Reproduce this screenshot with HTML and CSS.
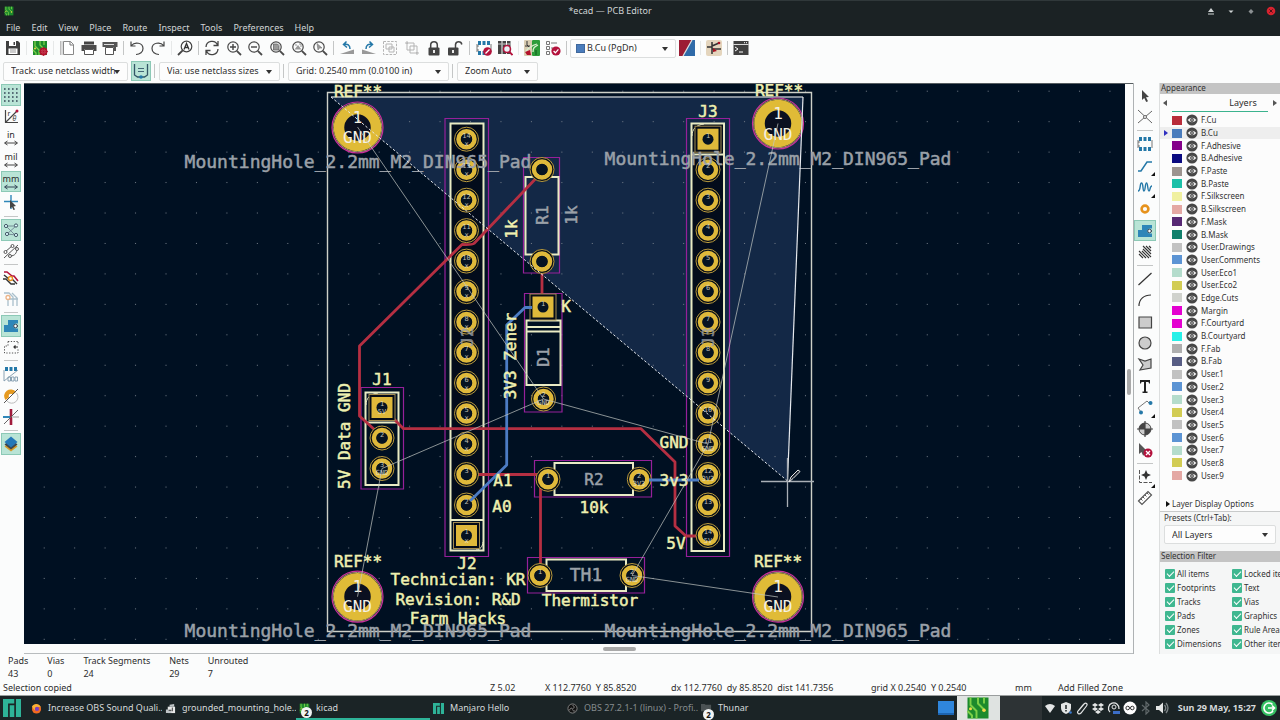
FILE: index.html
```html
<!DOCTYPE html>
<html lang="en">
<head>
<meta charset="utf-8">
<title>*ecad — PCB Editor</title>
<link rel="stylesheet" href="styles.css">
</head>
<body>
<svg class="defs" aria-hidden="true">
  <defs>
    <symbol id="eye" viewBox="0 0 12 12"><circle cx="6" cy="6" r="5.6" fill="#474747"/><path d="M1.6 6Q6 1.6 10.4 6Q6 10.4 1.6 6Z" fill="#f4f4f4"/><circle cx="6" cy="6" r="1.9" fill="#474747"/><circle cx="6" cy="6" r=".8" fill="#ddd"/></symbol>
    <symbol id="board" viewBox="0 0 16 16"><rect x="1" y="1" width="14" height="14" fill="#1c8a2c"/><path d="M3 1v5l4 4v5M8 1v4l4 4M1 10l3 3v2M12 1v4" stroke="#7ccf48" stroke-width="1.3" fill="none"/><circle cx="12" cy="9.500" r="1.200" fill="#f2d84a"/><circle cx="3" cy="8.500" r="1" fill="#f2d84a"/></symbol>
    <symbol id="lens" viewBox="0 0 16 16"><circle cx="7" cy="7" r="5.2" fill="none" stroke="#4a4a4a" stroke-width="1.2"/><path d="M10.8 10.8L15 15" stroke="#4a4a4a" stroke-width="1.8"/></symbol>
    <symbol id="manjaro" viewBox="0 0 16 16"><path d="M0 0h10v4H4.500v12H0zM6 5.500h4V16H6zM11.500 0H16v16h-4.500z" fill="#2eb398"/></symbol>
    <symbol id="zone" viewBox="0 0 16 16"><path d="M5 2h10v3.500h-2a2.500 2.500 0 0 0 0 5h2V14H1V7h4z" fill="#2f86b8"/><path d="M12.500 8H15" stroke="#333" stroke-width="1.500"/><circle cx="12.500" cy="8" r="1.800" fill="#fff" stroke="#345"/></symbol>
    <symbol id="fp" viewBox="0 0 16 16"><path d="M1 4v8M15 4v8M1 6h2M1 10h2" stroke="#555" stroke-width=".8"/><path d="M2 1h3v4H2zM6.500 1h3v4h-3zM11 1h3v4h-3zM2 11h3v4H2zM6.500 11h3v4h-3zM11 11h3v4h-3z" fill="#2478a8"/></symbol>
    <g id="pad"><circle r="12" fill="#050c18" stroke="#b99a3e"/><circle r="8" fill="none" stroke="#dfb93b" stroke-width="4.500"/><circle r="5.500" fill="#061322"/></g>
    <g id="sqpad"><rect x="-13" y="-13" width="26" height="26" fill="#050c18" stroke="#a28b50"/><rect x="-10.500" y="-10.500" width="21" height="21" fill="#dfb93b"/><circle r="5.500" fill="#061322"/></g>
    <g id="hole"><circle r="25.500" fill="#0b1020" stroke="#c8309c" stroke-width="1.200"/><circle r="24.300" fill="none" stroke="#c9b98a" stroke-width=".8"/><circle r="18.500" fill="none" stroke="#e0bb37" stroke-width="10.500"/></g>
    <pattern id="grid" x="29" y="76" width="30.450" height="30.450" patternUnits="userSpaceOnUse"><rect x="14.700" y="14.700" width="1" height="1" fill="#76808a"/></pattern>
  </defs>
</svg>

<header class="titlebar">
  <svg class="ic10"><use href="#board"/></svg>
  <h1>*ecad — PCB Editor</h1>
  <div class="wincontrols">
    <button aria-label="Shade"><svg viewBox="0 0 10 10"><path d="M2 6l3-4 3 4zM2 7.500h6v1H2z" fill="#cfd3d4"/></svg></button>
    <button aria-label="Minimize"><svg viewBox="0 0 10 10"><path d="M2.500 4.500h5L5 7z" fill="#cfd3d4"/></svg></button>
    <button aria-label="Maximize"><svg viewBox="0 0 10 10"><path d="M2.500 5.500L5 3l2.500 2.500L5 8z" fill="#8b9092"/></svg></button>
    <button aria-label="Close"><svg viewBox="0 0 10 10"><circle cx="5" cy="5" r="4.300" fill="#d8232f"/><path d="M3.400 3.400l3.200 3.200M6.600 3.400L3.400 6.600" stroke="#501018"/></svg></button>
  </div>
</header>
<nav class="menubar">
  <button>File</button><button>Edit</button><button>View</button><button>Place</button><button>Route</button><button>Inspect</button><button>Tools</button><button>Preferences</button><button>Help</button>
</nav>

<div class="toolbar">
  <div class="g g1"><button aria-label="Save"><svg viewBox="0 0 16 16"><path d="M1 1h12l2 2v12H1z" fill="#3f3f3f"/><path d="M4 1h7v5H4z" fill="#fff"/><path d="M8.500 2h1.500v3H8.500z" fill="#3f3f3f"/><path d="M3.500 8.500h9V14h-9z" fill="#fff"/><path d="M5 10h6M5 12h6" stroke="#999"/></svg></button></div>
  <span class="sep faint"></span>
  <div class="g g1"><button aria-label="Board setup"><svg viewBox="0 0 16 16"><use href="#board"/><circle cx="11.500" cy="11.500" r="3" fill="#e8a0a8" stroke="#b3122c" stroke-width="1.800"/><path d="M11.500 7v9M7 11.500h9M8.500 8.500l6 6M14.500 8.500l-6 6" stroke="#b3122c" stroke-width=".8"/></svg></button></div>
  <span class="sep faint"></span>
  <div class="g g3">
    <button aria-label="Page settings"><svg viewBox="0 0 16 16"><path d="M4.500 1.500h7l3 3v10h-10z" fill="#fff" stroke="#888"/><path d="M1.500 1v14M3 1v14" stroke="#bbb"/><path d="M11 1.500v3.500h3.500" stroke="#777" fill="none"/></svg></button>
    <button aria-label="Print"><svg viewBox="0 0 16 16"><path d="M3 1.500h10v3H3z" fill="#444"/><path d="M.5 5h15v6H13V9H3v2H.5z" fill="#4a4a4a"/><path d="M3.500 9.500h9v5h-9z" fill="#fff" stroke="#555"/></svg></button>
    <button aria-label="Plot"><svg viewBox="0 0 16 16"><path d="M.5 2h15v5H.5z" fill="#555"/><path d="M2 4.500h10" stroke="#ddd"/><path d="M3.500 7.500h8v7h-8z" fill="#fff" stroke="#555"/><path d="M12 7h2v4h-2z" fill="#555"/></svg></button>
  </div>
  <span class="sep"></span>
  <div class="g g2">
    <button aria-label="Undo"><svg viewBox="0 0 16 16"><path d="M2 1.500V6h4.500M2.500 5.500c3-4 11.500-3 11.500 3 0 3.500-3 6-7 6" fill="none" stroke="#444" stroke-width="1.200"/></svg></button>
    <button aria-label="Redo"><svg viewBox="0 0 16 16"><path d="M14 1.500V6H9.500M13.500 5.500C10.500 1.500 2 2.500 2 8.500c0 3.500 3 6 7 6" fill="none" stroke="#444" stroke-width="1.200"/></svg></button>
  </div>
  <span class="sep faint"></span>
  <div class="g g1"><button aria-label="Find"><svg viewBox="0 0 16 16"><circle cx="9.500" cy="6.500" r="5.300" fill="none" stroke="#444" stroke-width="1.200"/><path d="M5.700 10.300L1 15" stroke="#444" stroke-width="1.800"/><path d="M7 9.500L9.500 3.500 12 9.500M8 7.500h3" fill="none" stroke="#333" stroke-width="1.300"/></svg></button></div>
  <span class="sep"></span>
  <div class="g g6">
    <button aria-label="Refresh"><svg viewBox="0 0 16 16"><path d="M2 7a6 6 0 0 1 11.500-2M14 9a6 6 0 0 1-11.500 2M14 1v4.500H9.500M2 15v-4.500h4.500" fill="none" stroke="#444" stroke-width="1.300"/></svg></button>
    <button aria-label="Zoom in"><svg viewBox="0 0 16 16"><use href="#lens"/><path d="M4 7h6M7 4v6" stroke="#444" stroke-width="1.400"/></svg></button>
    <button aria-label="Zoom out"><svg viewBox="0 0 16 16"><use href="#lens"/><path d="M4 7h6" stroke="#444" stroke-width="1.400"/></svg></button>
    <button aria-label="Zoom to fit page"><svg viewBox="0 0 16 16"><use href="#lens"/><path d="M4.500 4h4l1.500 1.500V10H4.500z" fill="#999" stroke="#666" stroke-width=".8"/></svg></button>
    <button aria-label="Zoom to fit objects"><svg viewBox="0 0 16 16"><use href="#lens"/><path d="M3.500 9.500L7 5l3.500 4.500z" fill="#999"/><path d="M4 5h2M8 4h2v3" stroke="#999" fill="none"/></svg></button>
    <button aria-label="Zoom to selection"><svg viewBox="0 0 16 16"><use href="#lens"/><path d="M5 3.500l5 4.500H7.500L6 10z" fill="#999" stroke="#777" stroke-width=".6"/></svg></button>
  </div>
  <span class="sep"></span>
  <div class="g g6">
    <button aria-label="Rotate left"><svg viewBox="0 0 16 16"><path d="M15 9.500V14H1z" fill="#999"/><path d="M7.500 1.500L4.500 4.500l3.500 3M5 4.500C8.500 3.500 11 5 11 9" fill="none" stroke="#2478a8" stroke-width="1.500"/></svg></button>
    <button aria-label="Rotate right"><svg viewBox="0 0 16 16"><path d="M1 9.500V14h14z" fill="#999"/><path d="M8.500 1.500l3 3-3.500 3M11 4.500C7.500 3.500 5 5 5 9" fill="none" stroke="#2478a8" stroke-width="1.500"/></svg></button>
    <button aria-label="Group" disabled><svg viewBox="0 0 16 16"><path d="M1.500 1.500h13v13h-13z" fill="none" stroke="#b4b4b4" stroke-dasharray="2.500 1.300"/><path d="M4 4h6v5H4zM7 7h5v5H7z" fill="none" stroke="#b4b4b4"/></svg></button>
    <button aria-label="Ungroup" disabled><svg viewBox="0 0 16 16"><path d="M3 3h7v7H3zM6 6h7v7H6z" fill="none" stroke="#b4b4b4"/><path d="M1 3h3M3 1v3M12 13h3M13 12v3" stroke="#b4b4b4"/></svg></button>
    <button aria-label="Lock"><svg viewBox="0 0 16 16"><path d="M4.700 8V5a3.300 3.300 0 0 1 6.600 0v3" fill="none" stroke="#444" stroke-width="1.500"/><rect x="2.500" y="7.500" width="11" height="8" rx="1" fill="#444"/><path d="M8 10v3" stroke="#fff" stroke-width="1.800"/></svg></button>
    <button aria-label="Unlock"><svg viewBox="0 0 16 16"><path d="M8.500 8V4.500a3.200 3.200 0 0 1 6.300 0" fill="none" stroke="#444" stroke-width="1.500"/><rect x="1" y="7.500" width="10.500" height="8" rx="1" fill="#444"/><path d="M6 10v3" stroke="#fff" stroke-width="1.800"/></svg></button>
  </div>
  <span class="sep wide"></span>
  <div class="g g2">
    <button aria-label="Footprint editor"><svg viewBox="0 0 16 16"><use href="#fp"/><circle cx="11.500" cy="11.500" r="4.300" fill="#b3123c"/><path d="M9.500 13.500l4-4" stroke="#fff" stroke-width="1.300"/></svg></button>
    <button aria-label="Footprint library"><svg viewBox="0 0 16 16"><path d="M1 1h3.500v13H1zM5.500 1H9v13H5.500zM10 1h3.500v13H10z" fill="#444"/><path d="M1 4h3.500M5.500 4H9M10 4h3.500" stroke="#ccc"/><circle cx="10" cy="9" r="3.500" fill="#e9f1f5" stroke="#b3123c" stroke-width="1.500"/><path d="M12.500 12l3 3" stroke="#b3123c" stroke-width="1.800"/></svg></button>
  </div>
  <span class="sep faint"></span>
  <div class="g g2">
    <button aria-label="Update from schematic"><svg viewBox="0 0 16 16"><rect x="0" y="0" width="8" height="16" rx="1" fill="#d9cdb2"/><rect x="8" y="0" width="8" height="16" rx="1" fill="#2c9c3a"/><path d="M3 1v4l3 3M1 6h5" stroke="#333" fill="none"/><path d="M2 13c0-4 3-5 8-8M10 5l3-1M9 12c0-4 1-5 5-7" stroke="#d8f0d0" stroke-width="1.300" fill="none"/><path d="M1 12l5-2 1 5H3z" fill="#b3122c"/><path d="M12 10v5" stroke="#0c5818"/></svg></button>
    <button aria-label="Design rules check"><svg viewBox="0 0 16 16"><path d="M1.500 1.500h3v3h-3zM1.500 6.500h3v3h-3zM1.500 11.500h3v3h-3z" fill="none" stroke="#777"/><path d="M6 3h6M6 8h2" stroke="#777"/><circle cx="11" cy="11" r="4.600" fill="#b3123c"/><path d="M8.600 11l1.800 1.800 3-3.500" fill="none" stroke="#fff" stroke-width="1.300"/></svg></button>
  </div>
  <span class="sep"></span>
  <label class="combo layer"><i></i><select aria-label="Active layer"><option>B.Cu (PgDn)</option></select></label>
  <div class="g g1"><button aria-label="Layer pair"><svg viewBox="0 0 16 16"><path d="M0 0h13L4 16H0z" fill="#9c1c34"/><path d="M16 0v16H4L13 0z" fill="#2f6aa8"/><path d="M13 0L4 16" stroke="#ddd" stroke-width="1.200"/></svg></button></div>
  <span class="sep faint"></span>
  <div class="g g1"><button aria-label="Schematic editor"><svg viewBox="0 0 16 16"><rect width="16" height="16" rx="2" fill="#e4d5bd"/><path d="M6 2v12M1 7h5M6 6l7-3M6 9h9" stroke="#333" stroke-width="1.500" fill="none"/><path d="M7 8l4 3-4 1z" fill="#a12"/><circle cx="13" cy="3" r="1.300" fill="#a12"/></svg></button></div>
  <span class="sep"></span>
  <div class="g g1"><button aria-label="Scripting console"><svg viewBox="0 0 16 16"><rect x=".5" y="1" width="15" height="14" fill="#404040"/><path d="M.5 4.500h15" stroke="#fff" stroke-width=".8"/><path d="M2 7l3 2-3 2M6 12h4" stroke="#fff" fill="none"/><path d="M11 2.700h1M13 2.700h1" stroke="#fff"/></svg></button></div>
</div>

<div class="toolbar second">
  <label class="combo w-track"><select aria-label="Track width"><option>Track: use netclass width</option></select></label>
  <button class="on auto" aria-label="Use existing track width"><svg viewBox="0 0 16 16"><path d="M1.500 1v11l3 2h7l3-2V1" fill="none" stroke="#356" stroke-width="1.300"/><path d="M5 5.500h6M5 8.500h6" stroke="#467" stroke-width="1.200"/><circle cx="8" cy="14" r="1.800" fill="#2478a8"/></svg></button>
  <span class="sep"></span>
  <label class="combo w-via"><select aria-label="Via size"><option>Via: use netclass sizes</option></select></label>
  <span class="sep"></span>
  <label class="combo w-grid"><select aria-label="Grid"><option>Grid: 0.2540 mm (0.0100 in)</option></select></label>
  <span class="sep"></span>
  <label class="combo w-zoom"><select aria-label="Zoom"><option>Zoom Auto</option></select></label>
</div>

<main>
  <div class="side left">
    <div class="v v6">
      <button class="on" aria-label="Show grid"><svg viewBox="0 0 16 16"><path d="M1 2h15M1 6h15M1 10h15M1 14h15" stroke="#345" stroke-width="1.600" stroke-dasharray="1.600 2.400"/></svg></button>
      <button aria-label="Polar coordinates"><svg viewBox="0 0 16 16"><path d="M2.500 1v12.500H15M2.500 13.500L14 2" fill="none" stroke="#444" stroke-width="1.200"/><circle cx="14" cy="2" r="1.500" fill="#b3123c"/><text x="4.500" y="6.500" class="t7">r</text><text x="9.500" y="12" class="t7 it">θ</text></svg></button>
      <button class="unit" aria-label="Inches"><span>in</span><svg viewBox="0 0 16 6"><path d="M2 3h12M4.500 1l-3 2 3 2M11.500 1l3 2-3 2" fill="none" stroke="#444"/></svg></button>
      <button class="unit" aria-label="Mils"><span>mil</span><svg viewBox="0 0 16 6"><path d="M2 3h12M4.500 1l-3 2 3 2M11.500 1l3 2-3 2" fill="none" stroke="#444"/></svg></button>
      <button class="unit on" aria-label="Millimeters"><span>mm</span><svg viewBox="0 0 16 6"><path d="M2 3h12M4.500 1l-3 2 3 2M11.500 1l3 2-3 2" fill="none" stroke="#345"/></svg></button>
      <button aria-label="Full crosshair"><svg viewBox="0 0 16 16"><path d="M8 0v14M1 6.500h14" stroke="#2f86b8" stroke-width="1.400"/><path d="M7 5l6 6-2.500.5 1.500 3-1.500.5-1.500-3L7 13.500z" fill="#444"/></svg></button>
    </div>
    <span class="hsep"></span>
    <div class="v v2">
      <button class="on" aria-label="Show ratsnest"><svg viewBox="0 0 16 16"><path d="M3 4l9 9M13 4L4 12M3 4l10 0M4 12l9 1" fill="none" stroke="#678" stroke-width=".8"/><g fill="#dff" stroke="#456"><circle cx="3" cy="4" r="1.600"/><circle cx="13" cy="3.500" r="1.600"/><circle cx="4" cy="12" r="1.600"/><circle cx="13" cy="13" r="1.600"/></g></svg></button>
      <button aria-label="Curved ratsnest"><svg viewBox="0 0 16 16"><path d="M2 9L9 3M1 15L15 2M7 13c5 0 7-3 7-8" fill="none" stroke="#555"/><g fill="#fff" stroke="#555"><circle cx="2.500" cy="9" r="1.500"/><circle cx="9.500" cy="3" r="1.500"/><circle cx="7" cy="13" r="1.500"/><circle cx="14" cy="6" r="1.500"/></g></svg></button>
    </div>
    <span class="hsep"></span>
    <div class="v v2">
      <button aria-label="Net highlighting"><svg viewBox="0 0 16 16"><path d="M1 2h3l5 4h2l4 5" fill="none" stroke="#b3123c" stroke-width="1.600"/><path d="M1 5l5 4h3l5 5M0 9h3l5 5h4" fill="none" stroke="#333" stroke-width="1.400"/><circle cx="7.500" cy="8.500" r="2" fill="#fff" stroke="#e6921c" stroke-width="1.400"/></svg></button>
      <button aria-label="Dim nets"><svg viewBox="0 0 16 16"><path d="M1 2h5l4 4v9M9 2l5 5v8M5 8v7M5 8h10" fill="none" stroke="#a9bfcb" stroke-width="1.300"/><circle cx="5" cy="6.500" r="2" fill="#fff" stroke="#ebb488" stroke-width="1.300"/></svg></button>
    </div>
    <span class="hsep"></span>
    <div class="v v2">
      <button class="on" aria-label="Fill zones"><svg><use href="#zone"/></svg></button>
      <button aria-label="Zone outlines"><svg viewBox="0 0 16 16"><path d="M5 2.500h10M5 2.500V7H1.500v7H15v-4M15 3v3" fill="none" stroke="#555" stroke-dasharray="1.300 1.500"/><path d="M11 8h4M12.500 6.500L11 8l1.500 1.500" fill="none" stroke="#333" stroke-width="1.200"/></svg></button>
    </div>
    <span class="hsep"></span>
    <div class="v v3">
      <button aria-label="Sketch pads"><svg viewBox="0 0 16 16"><path d="M2 1h3v4H2zM6.500 1h3v4h-3zM11 1h3v4h-3z" fill="#2478a8"/><path d="M1 4v11L15 4M5 11h2.500v4H5zM8.500 11H11v4H8.500zM12 11h2.500v4H12z" fill="none" stroke="#7e99ab" stroke-width=".9"/></svg></button>
      <button aria-label="Sketch vias"><svg viewBox="0 0 16 16"><path d="M2.500 12A6 6 0 1 1 13 4z" fill="#e69a1f"/><path d="M13.500 5A6 6 0 0 1 4 13" fill="none" stroke="#bbb"/><circle cx="8" cy="8" r="2.300" fill="#fff"/><path d="M1 15L15 1" stroke="#555"/></svg></button>
      <button aria-label="Sketch tracks"><svg viewBox="0 0 16 16"><path d="M8 0v16" stroke="#a11c3c" stroke-width="2.600"/><path d="M0 8h7" stroke="#2f86b8" stroke-width="2"/><path d="M9 8h7" stroke="#ccc" stroke-width="2"/><path d="M1 15L15 1" stroke="#666"/></svg></button>
    </div>
    <span class="hsep"></span>
    <div class="v v1">
      <button class="on" aria-label="Layers manager"><svg viewBox="0 0 16 16"><path d="M8 5l6.500 5.500L8 15.500l-6.500-5z" fill="#d69a28"/><path d="M8 3l6.500 5.500L8 13.500l-6.500-5z" fill="#3c4650"/><path d="M8 .5L14.500 6 8 11.500 1.500 6z" fill="#2478b8"/></svg></button>
    </div>
  </div>

  <section class="work" aria-label="Board">
    <svg class="canvas" viewBox="24 84 1101 560" preserveAspectRatio="xMidYMid slice">
      <rect x="-600" y="-600" width="2400" height="2000" fill="#001022"/>
      <path d="M331 97H803L787.500 481Z" fill="#132846"/>
      <rect x="-600" y="-600" width="2400" height="2000" fill="url(#grid)"/>
      <path d="M451 124h32v396h-32zM692 124h32v426h-32z" fill="#030c1b"/>
      <g fill="none" stroke="#cdd0c8" stroke-width="1.400"><path d="M327.500 92.500H811.500V631.500H327.500Z"/><path d="M331 97H803" stroke="#aeb4bd"/></g>

      <g class="court">
        <path d="M445 118.500H488.500V556.500H445ZM686.500 118.500H729.500V556.500H686.500ZM361 387.500H403.500V489H361ZM523.500 157.500H559.500V273H523.500ZM524.500 293.500H562V412H524.500ZM534.500 460.500H651.500V497H534.500ZM527.500 557.500H644.500V593H527.500Z"/>
      </g>
      <g class="silk">
        <path d="M450.500 123.500H483.500V550.500H450.500ZM450.500 520H483.500M691.500 123.500H724V551H691.500ZM691.500 154.500H724M365.500 392.500H398.500V485H365.500ZM365.500 422.500H398.500M525.500 177H558.500V254.500H525.500ZM526.500 320.500H560.500V385H526.500ZM526.500 327H560.500M526.500 331.500H560.500M554.500 463H633V495H554.500ZM546.500 559.500H626V591H546.500Z"/>
        <path d="M476 550c4 0 7-4 7-8M692 136c0-7 4-11 12-12M366 405c0-7 4-11 12-12" stroke-width="1"/>
      </g>

      <g class="fcu">
        <path d="M542 172L474 243.500Q472 245 462 244.500L359.500 346V416L376 431M392 417L403.500 428.700H641L675 462V526L686 536H700M542 262V300M475 474.500H541M540.500 480V568"/>
      </g>

      <use href="#hole" x="357.500" y="127.500"/><use href="#hole" x="778" y="123.500"/><use href="#hole" x="357.500" y="596.700"/><use href="#hole" x="778" y="596.700"/>

      <g>
        <use href="#pad" x="466.500" y="139.200"/><use href="#pad" x="466.500" y="169.700"/><use href="#pad" x="466.500" y="200.200"/><use href="#pad" x="466.500" y="230.600"/><use href="#pad" x="466.500" y="261.100"/><use href="#pad" x="466.500" y="291.600"/><use href="#pad" x="466.500" y="322.100"/><use href="#pad" x="466.500" y="352.600"/><use href="#pad" x="466.500" y="383"/><use href="#pad" x="466.500" y="413.500"/><use href="#pad" x="466.500" y="444"/><use href="#pad" x="466.500" y="474.500"/><use href="#pad" x="466.500" y="505"/><use href="#sqpad" x="466.500" y="535.500"/>
        <use href="#sqpad" x="708" y="139.200"/><use href="#pad" x="708" y="169.700"/><use href="#pad" x="708" y="200.200"/><use href="#pad" x="708" y="230.600"/><use href="#pad" x="708" y="261.100"/><use href="#pad" x="708" y="291.600"/><use href="#pad" x="708" y="322.100"/><use href="#pad" x="708" y="352.600"/><use href="#pad" x="708" y="383"/><use href="#pad" x="708" y="413.500"/><use href="#pad" x="708" y="444"/><use href="#pad" x="708" y="474.500"/><use href="#pad" x="708" y="505"/><use href="#pad" x="708" y="535.500"/>
        <use href="#sqpad" x="382" y="407.500"/><use href="#pad" x="382" y="438"/><use href="#pad" x="382" y="468.500"/>
        <use href="#pad" x="542" y="169.500"/><use href="#pad" x="542" y="261.500"/>
        <use href="#sqpad" x="543" y="307"/><use href="#pad" x="543.500" y="399"/>
        <use href="#pad" x="548" y="479.300"/><use href="#pad" x="639.300" y="479.300"/>
        <use href="#pad" x="540" y="575.500"/><use href="#pad" x="632" y="575.500"/>
      </g>
      <path class="bcu" d="M532 307.500H525L506.700 325V465L470 501M649 480H699"/>

      <g class="fab">
        <text x="358" y="168" class="k18">MountingHole_2.2mm_M2_DIN965_Pad</text>
        <text x="778" y="165" class="k18">MountingHole_2.2mm_M2_DIN965_Pad</text>
        <text x="358" y="637" class="k18">MountingHole_2.2mm_M2_DIN965_Pad</text>
        <text x="778" y="637" class="k18">MountingHole_2.2mm_M2_DIN965_Pad</text>
        <text x="594" y="485">R2</text><text x="586" y="581" class="k18">TH1</text>
        <text transform="translate(548 215) rotate(-90)">R1</text>
        <text transform="translate(577 215) rotate(-90)">1k</text>
        <text transform="translate(549 357) rotate(-90)">D1</text>
      </g>

      <g class="num">
        <text x="466.500" y="138">14</text><text x="466.500" y="168">13</text><text x="466.500" y="199">12</text><text x="466.500" y="229">11</text><text x="466.500" y="260">10</text><text x="466.500" y="290">9</text><text x="466.500" y="321">8</text><text x="466.500" y="351">7</text><text x="466.500" y="382">6</text><text x="466.500" y="412">5</text><text x="466.500" y="443">4</text><text x="466.500" y="473">3</text><text x="466.500" y="504">2</text><text x="466.500" y="534">1</text>
        <text x="466.500" y="146">x</text><text x="466.500" y="176">x</text><text x="466.500" y="207">x</text><text x="466.500" y="237">x</text><text x="466.500" y="268">x</text><text x="466.500" y="298">x</text><text x="466.500" y="329">x</text><text x="466.500" y="359">x</text><text x="466.500" y="390">x</text><text x="466.500" y="420">x</text><text x="466.500" y="451">x</text><text x="466.500" y="543">x</text>
        <text x="708" y="138">1</text><text x="708" y="168">2</text><text x="708" y="199">3</text><text x="708" y="229">4</text><text x="708" y="260">5</text><text x="708" y="290">6</text><text x="708" y="321">7</text><text x="708" y="351">8</text><text x="708" y="382">9</text><text x="708" y="412">10</text><text x="708" y="443">11</text><text x="708" y="473">12</text><text x="708" y="504">13</text><text x="708" y="534">14</text>
        <text x="708" y="451">GND</text><text x="708" y="481">3V3</text><text x="708" y="543">5V</text>
        <text x="382" y="406">1</text><text x="382" y="414">5V</text><text x="382" y="437">2</text><text x="382" y="467">3</text><text x="382" y="475">GND</text>
        <text x="543" y="306">1</text><text x="543.500" y="397">2</text><text x="543.500" y="405">GND</text><text x="548" y="478">1</text><text x="639" y="478">2</text><text x="639" y="486">3V3</text><text x="540" y="574">1</text><text x="632" y="574">2</text><text x="632" y="582">GND</text>
      </g>
      <g class="hl">
        <text x="357.500" y="123">1</text><text x="357.500" y="143">GND</text><text x="778" y="119">1</text><text x="778" y="140">GND</text>
        <text x="357.500" y="592">1</text><text x="357.500" y="612">GND</text><text x="778" y="592">1</text><text x="778" y="612">GND</text>
      </g>

      <g class="silktext">
        <text x="358" y="97">REF**</text><text x="779" y="96">REF**</text><text x="358" y="567">REF**</text><text x="778" y="567">REF**</text>
        <text x="708" y="117">J3</text><text x="382" y="385">J1</text><text x="467" y="569">J2</text>
        <text x="566" y="312">K</text><text x="503" y="486">A1</text><text x="502" y="512">A0</text>
        <text x="674" y="448">GND</text><text x="674" y="486">3v3</text><text x="676" y="549">5V</text>
        <text x="594" y="513">10k</text><text x="590" y="606">Thermistor</text>
        <text x="458" y="585">Technician: KR</text><text x="458" y="605">Revision: R&amp;D</text><text x="458" y="624">Farm Hacks</text>
        <text transform="translate(517 229) rotate(-90)">1k</text>
        <text transform="translate(516 356) rotate(-90)">3V3 Zener</text>
        <text transform="translate(350 436) rotate(-90)">5V Data GND</text>
      </g>
      <g class="fab ghost"><text transform="translate(473 337) rotate(-90)">J2</text><text transform="translate(714 337) rotate(-90)">J3</text></g>

      <path class="rats" d="M357.500 127L543.500 399L382 468.500L357.500 596.700M543.500 399L708 444L778 123.500M708 444L632 575.500L778 597"/>
      <path d="M803 97L787.500 481" fill="none" stroke="#e6e9ee" stroke-width="1.200"/>
      <path d="M787.500 481L331 97" fill="none" stroke="#e6e9ee" stroke-dasharray="2.500 2"/>
      <path d="M761 481.500H814M787.500 458V507" fill="none" stroke="#a9afb6" stroke-width="1.300"/>
      <path d="M789 482l2-5 7-7 2 1.500-7 7z" fill="#18202c" stroke="#e8e8e8"/>
    </svg>
    <div class="vscroll"><i></i></div>
    <div class="hscroll"><i></i></div>
  </section>

  <div class="side right">
    <div class="v v2">
      <button aria-label="Select"><svg viewBox="0 0 16 16"><path d="M5 2l7 7-3 .3 2 4-1.800.8-2-4L5 12z" fill="#444"/></svg></button>
      <button aria-label="Local ratsnest"><svg viewBox="0 0 16 16"><path d="M1 1l14 13M15 2L1 14" stroke="#666"/><circle cx="8" cy="8" r="1.500" fill="#fff" stroke="#666"/></svg></button>
    </div>
    <span class="hsep"></span>
    <div class="v v6">
      <button aria-label="Add footprint"><svg><use href="#fp"/></svg></button>
      <button aria-label="Route track" class="more"><svg viewBox="0 0 16 16"><path d="M1 13h3l6-9h5" fill="none" stroke="#2478a8" stroke-width="1.500"/></svg></button>
      <button aria-label="Tune length" class="more"><svg viewBox="0 0 16 16"><path d="M1 12c3 0 1.500-8 3.500-8s1 8 2.500 8 1-8 2.500-8 1 8 2.500 8 .5-5 3-5" fill="none" stroke="#2478a8" stroke-width="1.400"/></svg></button>
      <button aria-label="Add via"><svg viewBox="0 0 16 16"><circle cx="8" cy="8" r="3.400" fill="none" stroke="#e6921c" stroke-width="2.600"/></svg></button>
      <button class="on" aria-label="Add filled zone"><svg><use href="#zone"/></svg></button>
      <button aria-label="Add rule area"><svg viewBox="0 0 16 16"><path d="M6 2l8 8M9 2l5 5M12 2l2 2M2 7l7 7M5 7l7 7M6 5l8 8M2 10l4 4" stroke="#333" stroke-width="1.100"/></svg></button>
    </div>
    <span class="hsep"></span>
    <div class="v v9">
      <button aria-label="Line"><svg viewBox="0 0 16 16"><path d="M1.500 14L14.500 2" stroke="#333" stroke-width="1.200"/></svg></button>
      <button aria-label="Arc"><svg viewBox="0 0 16 16"><path d="M2 14C2 7 7 3 14 3" fill="none" stroke="#333" stroke-width="1.200"/></svg></button>
      <button aria-label="Rectangle"><svg viewBox="0 0 16 16"><path d="M2 3h12.500v11H2z" fill="#ccc" stroke="#444" stroke-width="1.200"/></svg></button>
      <button aria-label="Circle"><svg viewBox="0 0 16 16"><circle cx="8" cy="8" r="6" fill="#ccc" stroke="#444" stroke-width="1.200"/></svg></button>
      <button aria-label="Polygon"><svg viewBox="0 0 16 16"><path d="M2 3l6 2 6-2v9L3 14l3-5z" fill="#ccc" stroke="#444" stroke-width="1.200"/></svg></button>
      <button aria-label="Text"><svg viewBox="0 0 16 16"><path d="M3 2h10v3.500h-1L11.500 4H9v9.500h1.500V15h-5v-1.500H7V4H4.500L4 5.500H3z" fill="#222"/></svg></button>
      <button aria-label="Dimension" class="more"><svg viewBox="0 0 16 16"><path d="M1 9L10 2M1 9l3 4M10 2l3 3" fill="none" stroke="#777"/><circle cx="4" cy="13.500" r="2" fill="#2478a8"/><circle cx="13.500" cy="4" r="2" fill="#2478a8"/></svg></button>
      <button aria-label="Layer alignment target"><svg viewBox="0 0 16 16"><circle cx="8" cy="8" r="6" fill="#ccc" stroke="#444"/><path d="M8 8V2a6 6 0 0 0-6 6zM8 8v6a6 6 0 0 0 6-6z" fill="#444"/><path d="M8 0v16M0 8h16" stroke="#444" stroke-width="1.200"/></svg></button>
      <button aria-label="Delete"><svg viewBox="0 0 16 16"><path d="M2 1l8 8H7l1 4-2 .5L4.500 10 2 12z" fill="#555"/><circle cx="11" cy="11" r="4.500" fill="#b3123c"/><path d="M9 9l4 4M13 9l-4 4" stroke="#fff" stroke-width="1.300"/></svg></button>
    </div>
    <span class="hsep"></span>
    <div class="v v2">
      <button aria-label="Set origin" class="more"><svg viewBox="0 0 16 16"><path d="M2.500 1v12.500H15" fill="none" stroke="#555" stroke-dasharray="4 1.500"/><path d="M9 1l1.500 3.500L14 6l-3.500 1.500L9 11 7.500 7.500 4 6l3.500-1.500z" fill="#333"/></svg></button>
      <button aria-label="Measure"><svg viewBox="0 0 16 16"><path d="M1.500 11L11 1.500l3.500 3.500L5 14.500z" fill="#fff" stroke="#555" stroke-width="1.200"/><path d="M4 9l1.500 1.500M6 7l1.500 1.500M8 5l1.500 1.500M10 3l1.500 1.500" stroke="#555"/></svg></button>
    </div>
  </div>

  <aside>
    <h2>Appearance</h2>
    <div class="card">
      <div class="tabs"><button aria-label="Previous tab"><svg viewBox="0 0 6 8"><path d="M5 1v6L1 4z" fill="#555"/></svg></button><button class="tab">Layers</button><button aria-label="Next tab"><svg viewBox="0 0 6 8"><path d="M1 1v6l4-3z" fill="#555"/></svg></button></div>
      <ul class="layers">
        <li><i style="background:#b92c3a"></i><button aria-label="Toggle"><svg><use href="#eye"/></svg></button>F.Cu</li>
        <li class="cur"><i style="background:#4a7cbc"></i><button aria-label="Toggle"><svg><use href="#eye"/></svg></button>B.Cu</li>
        <li><i style="background:#84008a"></i><button aria-label="Toggle"><svg><use href="#eye"/></svg></button>F.Adhesive</li>
        <li><i style="background:#0a0a80"></i><button aria-label="Toggle"><svg><use href="#eye"/></svg></button>B.Adhesive</li>
        <li><i style="background:#9c9490"></i><button aria-label="Toggle"><svg><use href="#eye"/></svg></button>F.Paste</li>
        <li><i style="background:#1cc0a8"></i><button aria-label="Toggle"><svg><use href="#eye"/></svg></button>B.Paste</li>
        <li><i style="background:#f0f0a0"></i><button aria-label="Toggle"><svg><use href="#eye"/></svg></button>F.Silkscreen</li>
        <li><i style="background:#e4a8a4"></i><button aria-label="Toggle"><svg><use href="#eye"/></svg></button>B.Silkscreen</li>
        <li><i style="background:#572874"></i><button aria-label="Toggle"><svg><use href="#eye"/></svg></button>F.Mask</li>
        <li><i style="background:#12806c"></i><button aria-label="Toggle"><svg><use href="#eye"/></svg></button>B.Mask</li>
        <li><i style="background:#c2c2c2"></i><button aria-label="Toggle"><svg><use href="#eye"/></svg></button>User.Drawings</li>
        <li><i style="background:#5c94d4"></i><button aria-label="Toggle"><svg><use href="#eye"/></svg></button>User.Comments</li>
        <li><i style="background:#b4dccc"></i><button aria-label="Toggle"><svg><use href="#eye"/></svg></button>User.Eco1</li>
        <li><i style="background:#d2cc54"></i><button aria-label="Toggle"><svg><use href="#eye"/></svg></button>User.Eco2</li>
        <li><i style="background:#d0d2cd"></i><button aria-label="Toggle"><svg><use href="#eye"/></svg></button>Edge.Cuts</li>
        <li><i style="background:#e400d0"></i><button aria-label="Toggle"><svg><use href="#eye"/></svg></button>Margin</li>
        <li><i style="background:#e400d0"></i><button aria-label="Toggle"><svg><use href="#eye"/></svg></button>F.Courtyard</li>
        <li><i style="background:#26f0e8"></i><button aria-label="Toggle"><svg><use href="#eye"/></svg></button>B.Courtyard</li>
        <li><i style="background:#afafaf"></i><button aria-label="Toggle"><svg><use href="#eye"/></svg></button>F.Fab</li>
        <li><i style="background:#585d84"></i><button aria-label="Toggle"><svg><use href="#eye"/></svg></button>B.Fab</li>
        <li><i style="background:#c2c2c2"></i><button aria-label="Toggle"><svg><use href="#eye"/></svg></button>User.1</li>
        <li><i style="background:#5c94d4"></i><button aria-label="Toggle"><svg><use href="#eye"/></svg></button>User.2</li>
        <li><i style="background:#b4dccc"></i><button aria-label="Toggle"><svg><use href="#eye"/></svg></button>User.3</li>
        <li><i style="background:#d2cc54"></i><button aria-label="Toggle"><svg><use href="#eye"/></svg></button>User.4</li>
        <li><i style="background:#c2c2c2"></i><button aria-label="Toggle"><svg><use href="#eye"/></svg></button>User.5</li>
        <li><i style="background:#5c94d4"></i><button aria-label="Toggle"><svg><use href="#eye"/></svg></button>User.6</li>
        <li><i style="background:#b4dccc"></i><button aria-label="Toggle"><svg><use href="#eye"/></svg></button>User.7</li>
        <li><i style="background:#d2cc54"></i><button aria-label="Toggle"><svg><use href="#eye"/></svg></button>User.8</li>
        <li><i style="background:#e4a8a4"></i><button aria-label="Toggle"><svg><use href="#eye"/></svg></button>User.9</li>
      </ul>
      <button class="expander">Layer Display Options</button>
    </div>
    <div class="presets">
      <label for="preset">Presets (Ctrl+Tab):</label>
      <div class="combo"><select id="preset"><option>All Layers</option></select></div>
    </div>
    <h2>Selection Filter</h2>
    <div class="filter">
      <label><input type="checkbox" checked>All items</label><label><input type="checkbox" checked>Locked items</label>
      <label><input type="checkbox" checked>Footprints</label><label><input type="checkbox" checked>Text</label>
      <label><input type="checkbox" checked>Tracks</label><label><input type="checkbox" checked>Vias</label>
      <label><input type="checkbox" checked>Pads</label><label><input type="checkbox" checked>Graphics</label>
      <label><input type="checkbox" checked>Zones</label><label><input type="checkbox" checked>Rule Areas</label>
      <label><input type="checkbox" checked>Dimensions</label><label><input type="checkbox" checked>Other items</label>
    </div>
  </aside>
</main>

<dl class="info">
  <div><dt>Pads</dt><dd>43</dd></div><div><dt>Vias</dt><dd>0</dd></div><div><dt>Track Segments</dt><dd>24</dd></div><div><dt>Nets</dt><dd>29</dd></div><div><dt>Unrouted</dt><dd>7</dd></div>
</dl>
<div class="status">
  <span>Selection copied</span><span>Z 5.02</span><span>X 112.7760&nbsp; Y 85.8520</span><span>dx 112.7760&nbsp; dy 85.8520&nbsp; dist 141.7356</span><span>grid X 0.2540&nbsp; Y 0.2540</span><span>mm</span><span>Add Filled Zone</span>
</div>

<footer class="taskbar">
  <button class="start" aria-label="Menu"><svg><use href="#manjaro"/></svg></button>
  <button class="task"><svg viewBox="0 0 12 12"><circle cx="6" cy="6.500" r="5" fill="#f26a21"/><path d="M1 4c2-4 8-4 10 1l-2-1-3 1-2 3z" fill="#fbb034"/><circle cx="6.500" cy="6.500" r="2.300" fill="#7a3fc0"/></svg><span>Increase OBS Sound Quali...</span></button>
  <button class="task"><svg viewBox="0 0 12 12"><path d="M3 4h8v7H3z" fill="#e8e8e8"/><path d="M1 7h6v4H1zM5 2l5-1v3H5z" fill="#bfc4c6"/><path d="M4 8h3M8 5v4" stroke="#333"/></svg><span>grounded_mounting_hole...</span></button>
  <button class="task active"><svg><use href="#board"/></svg><b>2</b><span>kicad</span></button>
  <button class="task"><svg><use href="#manjaro"/></svg><span>Manjaro Hello</span></button>
  <button class="task dim"><svg viewBox="0 0 12 12"><circle cx="6" cy="6" r="5" fill="#111" stroke="#888"/><path d="M6 2.500a2 2 0 0 1 1 3.500M3 8a2 2 0 0 1 3-2M9 8.500A2 2 0 0 1 6 7" fill="none" stroke="#999"/></svg><span>OBS 27.2.1-1 (linux) - Profi...</span></button>
  <button class="task thunar"><svg viewBox="0 0 12 12"><path d="M0 1h4l1 1h6v7H0z" fill="#4b5254"/></svg><b>2</b><span>Thunar</span></button>
  <div class="pager"><i></i></div>
  <div class="pager cur"><svg><use href="#board"/></svg></div>
  <div class="pager empty"></div>
  <div class="tray">
    <svg viewBox="0 0 14 14"><path d="M2 5q5-4 10 0L7 12z" fill="#e4e6e6"/></svg>
    <svg viewBox="0 0 14 14"><path d="M7 1l5 2v4c0 3-2 5-5 6-3-1-5-3-5-6V3z" fill="#e4e6e6"/><path d="M7 4v4M7 9v1.500" stroke="#1c2426" stroke-width="1.500"/><circle cx="11.500" cy="11.500" r="1.300" fill="#3a7ad0"/></svg>
    <svg viewBox="0 0 14 14"><path d="M4 9l5-6c2-2 4 0 2.500 2L6 12c-2 2-4.500 0-3-2l5-6" fill="none" stroke="#e4e6e6" stroke-width="1.200"/></svg>
    <svg viewBox="0 0 14 14"><path d="M4 2l3 2-3 2-3-2zM10 2l3 2-3 2-3-2zM4 6l3 2-3 2-3-2zM10 6l3 2-3 2-3-2zM7 9l3 2-3 2-3-2z" fill="#e4e6e6"/></svg>
    <svg viewBox="0 0 14 14"><path d="M3 11A5.300 5.300 0 1 1 12 8" fill="none" stroke="#e4e6e6" stroke-width="1.300"/><circle cx="7" cy="6" r="2" fill="none" stroke="#e4e6e6"/><path d="M6 10h7v3H6z" fill="#3c6ec8"/></svg>
    <svg viewBox="0 0 14 14"><circle cx="7" cy="7" r="6.500" fill="#fff"/><circle cx="4.700" cy="7" r="1.800" fill="none" stroke="#333"/><circle cx="9.300" cy="7" r="1.800" fill="none" stroke="#333"/></svg>
    <svg viewBox="0 0 14 14"><path d="M3 4l7 6-3 3V1l3 3-7 6" fill="none" stroke="#60686a" stroke-width="1.200"/></svg>
    <svg viewBox="0 0 14 14"><path d="M1 5h3l4-3.500v11L4 9H1z" fill="#e4e6e6"/><path d="M9.500 4q2.500 3 0 6M11 2q4 5 0 10" fill="none" stroke="#7c8486" stroke-width="1.300"/></svg>
  </div>
  <time>Sun 29 May, 15:27</time>
  <button class="logout" aria-label="Log out"><svg viewBox="0 0 16 16"><circle cx="8" cy="8" r="8" fill="#35c063"/><path d="M11.500 4.500A5 5 0 1 0 12 11M7 8h7M11 5.500L13.500 8 11 10.500" fill="none" stroke="#fff" stroke-width="1.600"/></svg></button>
</footer>
</body>
</html>
```
FILE: styles.css
```css
* { box-sizing: border-box; }
html, body { height: 100%; }
body {
  margin: 0;
  display: flex;
  flex-direction: column;
  overflow: hidden;
  font: 9px/12px "Noto Sans", sans-serif;
  color: #2c2c2c;
  background: #fbfcfc;
}
button {
  margin: 0; padding: 0; border: 0;
  background: none; color: inherit; font: inherit;
}
svg { display: block; }
.defs { position: absolute; width: 0; height: 0; }

.titlebar {
  display: flex; align-items: center;
  height: 20px; padding: 0 4px;
  background: #1b2224; color: #d0d4d5;
  border-top: 1px solid #30383a;
}
.titlebar h1 { flex: 1; margin: 0; font: inherit; text-align: center; }
.ic10 { width: 10px; height: 10px; }
.wincontrols { display: flex; gap: 10px; }
.wincontrols svg { width: 10px; height: 10px; }

.menubar {
  display: flex; gap: 11px; align-items: center;
  height: 16px; padding: 0 6px;
  background: #1b2224; color: #d0d4d5;
}

.toolbar { display: flex; align-items: center; height: 24px; padding: 0 2px; }
.toolbar.second { height: 22px; padding: 0 3px; }
.toolbar.second + main { margin-top: 1px; }
.g { display: flex; height: 22px; }
.g button { flex: 1; display: flex; align-items: center; justify-content: center; }
.g1 { width: 22px; }
.g2 { width: 43px; }
.g3 { width: 65px; }
.g6 { width: 130px; }
.g svg, .side svg, .auto svg { width: 16px; height: 16px; }
.sep { width: 1px; height: 14px; margin: 0 2px; background: #c4c6c6; }
.sep.faint { background: #e6e8e8; }
.sep.wide { margin: 0 3px; }
.second .sep { margin: 0 4px 0 3px; }

.combo {
  position: relative;
  display: flex; align-items: center;
  height: 19px;
  border: 1px solid #dcdede; border-radius: 2px;
  background: #fdfdfd;
}
.combo select {
  flex: 1; width: 100%; height: 100%;
  padding: 0 7px; border: 0;
  appearance: none; background: none;
  font: inherit; color: #2e2e2e;
}
.combo::after {
  content: ""; position: absolute; right: 7px; top: 7px;
  border: 3px solid transparent; border-top: 4px solid #333; border-bottom: 0;
  pointer-events: none;
}
.layer { width: 106px; padding-left: 5px; margin-left: 1px; }
.layer select { padding: 0 2px; }
.layer i { width: 9px; height: 9px; background: #4a7cbc; border: 1px solid #40689c; }
.w-track { width: 125px; }
.w-via { width: 121px; }
.w-grid { width: 161px; }
.w-zoom { width: 81px; }
.auto { width: 20px; height: 20px; margin-left: 3px; display: flex; align-items: center; justify-content: center; }
.on { background: #b9e4d6; box-shadow: inset 0 0 0 1px #8cc9b6; }

main { flex: 1; min-height: 0; display: flex; }
.side { width: 24px; display: flex; flex-direction: column; }
.side.left { padding: 1px 3px 0 1px; }
.side.right { border-left: 1px solid #aeb2b4; width: 26px; padding: 2px 3px 0 0; }
.v { display: flex; flex-direction: column; }
.v button { flex: 1; position: relative; display: flex; align-items: center; justify-content: center; }
.v1 { height: 22px; }
.v2 { height: 43px; }
.v3 { height: 65px; }
.v6 { height: 130px; }
.v9 { height: 193px; }
.hsep { height: 1px; margin: 2px 3px; background: #c4c6c6; }
.more::after {
  content: ""; position: absolute; right: 1px; bottom: 0;
  border-left: 4px solid transparent; border-bottom: 4px solid #111;
}
.t7 { font-size: 7px; fill: #333; stroke: none; }
.it { font-style: italic; }
.v .unit { flex-direction: column; }
.unit span { line-height: 10px; }
.side .unit svg { height: 6px; }

.work {
  flex: 1; min-width: 0;
  display: grid;
  grid-template: minmax(0, 1fr) 9px / minmax(0, 1fr) 8px;
  border-top: 1px solid #555c60;
  border-bottom: 1px solid #b8bcbe;
}
.canvas { width: 100%; height: 100%; overflow: hidden; }
.vscroll i { display: block; width: 4px; height: 26px; margin: 285px 2px 0; border-radius: 2px; background: #a9a9a9; }
.hscroll i { display: block; width: 33px; height: 4px; margin: 3px auto 0; border-radius: 2px; background: #a9a9a9; }
.hscroll { padding-right: 10px; padding-left: 100px; }

.canvas text { font-family: "DejaVu Sans Mono", monospace; font-size: 16px; text-anchor: middle; }
.canvas .k18 { font-size: 18px; }
.fab { fill: #9aa0a8; stroke: #9aa0a8; stroke-width: .5; }
.ghost { opacity: .8; }
.silktext { fill: #eef0b0; stroke: #eef0b0; stroke-width: .5; }
.silk { fill: none; stroke: #e9ebc4; stroke-width: 2; }
.court { fill: none; stroke: #96209a; stroke-width: 1.2; }
.fcu { fill: none; stroke: #b52f42; stroke-width: 2.8; stroke-linejoin: round; }
.bcu { fill: none; stroke: #4c7cc4; stroke-width: 2.8; stroke-linejoin: round; }
.rats { fill: none; stroke: #c4c8c4; stroke-width: .7; }
.num { fill: #e8e4d8; opacity: .8; }
.canvas .num text { font-size: 7px; }
.hl { fill: #f4f0e4; }

aside { width: 121px; overflow: hidden; display: flex; flex-direction: column; background: #f5f6f6; border-left: 1px solid #dcdede; }
aside h2 { margin: 0; height: 11px; padding-left: 1px; font-size: 8px; font-weight: normal; line-height: 10px; background: #c4c4c4; color: #333; }
.card { flex: 1; min-height: 0; display: flex; flex-direction: column; background: #fcfcfc; border-bottom: 1px solid #c8caca; }
.tabs { display: flex; justify-content: space-between; height: 18px; margin: 0 2px; }
.tabs .tab { flex: 1; padding-left: 46px; margin: 0 4px; border-bottom: 1px solid #3cb38e; text-align: center; }
.tabs button:not(.tab) { width: 6px; }
.tabs .tab + button svg, .tabs svg { width: 6px; height: 8px; }
.layers {
  flex: 1; min-height: 0;
  margin: 2px 0 14px; padding: 0; list-style: none;
  display: grid; grid-auto-rows: minmax(0, 1fr);
  font-size: 8px; color: #333;
}
.layers li { display: flex; align-items: center; padding-left: 12px; }
.layers i { width: 10px; height: 9px; margin-right: 4px; }
.layers button { margin-right: 3px; }
.layers svg { width: 12px; height: 12px; }
.layers .cur { background: #eeeeee; padding-left: 4px; }
.layers .cur::before { content: ""; margin-right: 4px; border: 3px solid transparent; border-left: 4px solid #3030c0; border-right: 0; }
.expander { display: flex; align-items: center; height: 15px; padding-left: 6px; font-size: 8px; color: #333; }
.expander::before { content: ""; margin-right: 2px; border: 3px solid transparent; border-left: 4px solid #111; border-right: 0; }
.presets { padding: 0 4px 7px; font-size: 8px; color: #333; }
.presets .combo { font-size: 9px; margin-top: 1px; }
.filter { display: grid; grid-template-columns: 67px 80px; grid-auto-rows: 14px; padding: 5px 0 3px 5px; font-size: 8px; color: #333; }
.filter label { display: flex; align-items: center; gap: 2px; white-space: nowrap; }
.filter input { appearance: none; width: 10px; height: 10px; margin: 0; background: #3fb790; border-radius: 1px; display: grid; place-items: center; }
.filter input:checked::before { content: ""; width: 6px; height: 3px; border: solid #fff; border-width: 0 0 1px 1px; transform: translateY(-1px) rotate(-45deg); }

.info { display: flex; gap: 19px; height: 26px; margin: 0; padding: 0 8px; }
.info dt, .info dd { margin: 0; line-height: 13px; }
.status {
  display: grid; align-items: center;
  grid-template-columns: 487fr 55fr 126fr 200fr 144fr 43fr 219fr;
  height: 16px; padding: 0 3px; white-space: nowrap;
  border-bottom: 1px solid #9a9e9e;
}

.taskbar { display: flex; align-items: center; height: 24px; background: #1b2426; color: #d6dadb; }
.start { width: 28px; padding-left: 3px; }
.start svg { width: 18px; height: 18px; }
.task { position: relative; flex: 0 1 134px; height: 24px; display: flex; align-items: center; gap: 6px; padding-left: 3px; white-space: nowrap; overflow: hidden; }
.task svg { flex: none; width: 11px; height: 11px; }
.task.dim { color: #868c8e; }
.task.active { border-bottom: 2px solid #2eb398; padding-top: 2px; }
.task b { position: absolute; left: 5px; bottom: 0; width: 11px; height: 11px; border-radius: 50%; background: #f2f4f4; color: #111; font-size: 8px; line-height: 11px; text-align: center; }
.thunar { flex: 1 1 134px; }
.pager { width: 22px; height: 24px; display: grid; place-items: center; }
.pager i { width: 16px; height: 14px; background: #2f86dc; border-bottom: 2px solid #1c64b0; }
.pager.cur { width: 43px; background: #dfe3e1; }
.pager.cur svg { width: 24px; height: 24px; }
.pager.empty { width: 42px; background: #2d3335; }
.tray { display: flex; gap: 2px; padding: 0 9px 0 1px; }
.tray svg { width: 14px; height: 14px; }
time { font-weight: bold; }
.logout { padding: 0 3px 0 5px; }
.logout svg { width: 16px; height: 16px; }
```
